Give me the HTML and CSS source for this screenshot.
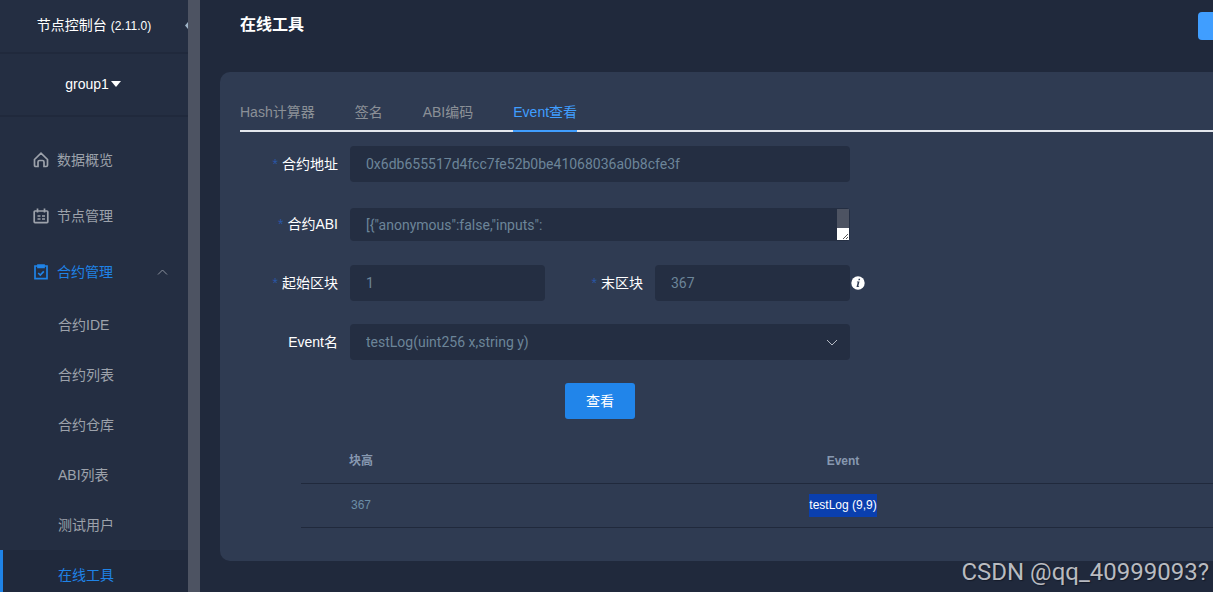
FILE: index.html
```html
<!DOCTYPE html>
<html lang="zh-CN">
<head>
<meta charset="utf-8">
<title>在线工具</title>
<link rel="stylesheet" href="styles.css">
</head>
<body>
<div class="app">
  <aside class="sidebar">
    <header class="brand">
      <span>节点控制台 <small class="version">(2.11.0)</small></span>
      <svg class="collapse" viewBox="0 0 3 7" aria-hidden="true"><path d="M3 0v7L0 3.5z"/></svg>
    </header>
    <button class="group" type="button">group1<svg class="caret" viewBox="0 0 10 6" aria-hidden="true"><path d="M0 0h10L5 6z"/></svg></button>
    <nav class="menu">
      <a class="item" href="#">
        <svg class="icon" viewBox="0 0 16 16" aria-hidden="true"><path d="M1.500 7.500 8 1.200l6.500 6.300v5.700q0 1.300-1.300 1.300H11V10q0-1.500-1.500-1.500h-3Q5 8.500 5 10v4.500H2.800q-1.300 0-1.300-1.300z"/></svg>
        <span>数据概览</span>
      </a>
      <a class="item" href="#">
        <svg class="icon" viewBox="0 0 16 16" aria-hidden="true"><path d="M2 3h12q.8 0 .8.800v10q0 .8-.8.8H2q-.8 0-.8-.8v-10Q1.200 3 2 3zM4.500.500v4M11.500.500v4M4.500 8h3M9 8h3M4.500 11h3M9 11h3"/></svg>
        <span>节点管理</span>
      </a>
      <a class="item current" href="#">
        <svg class="icon" viewBox="0 0 16 16" aria-hidden="true"><path d="M2 2h12v12.700H2zM5 1.200h6v2.300H5zM5.200 9l2.100 2 3.500-3.700"/></svg>
        <span>合约管理</span>
        <svg class="fold" viewBox="0 0 10 6" aria-hidden="true"><path d="M.5 5.500 5 1l4.500 4.500"/></svg>
      </a>
      <a class="sub" href="#">合约IDE</a>
      <a class="sub" href="#">合约列表</a>
      <a class="sub" href="#">合约仓库</a>
      <a class="sub" href="#">ABI列表</a>
      <a class="sub" href="#">测试用户</a>
      <a class="sub active" href="#">在线工具</a>
    </nav>
  </aside>

  <main class="main">
    <header class="topbar">
      <h1 class="title">在线工具</h1>
      <button class="action" type="button" aria-label="操作"></button>
    </header>
    <section class="card">
      <nav class="tabs">
        <a class="tab" href="#">Hash计算器</a>
        <a class="tab" href="#">签名</a>
        <a class="tab" href="#">ABI编码</a>
        <a class="tab selected" href="#">Event查看</a>
      </nav>
      <form class="form">
        <div class="row">
          <label class="label required" for="address">合约地址</label>
          <input class="field" id="address" type="text" value="0x6db655517d4fcc7fe52b0be41068036a0b8cfe3f">
        </div>
        <div class="row">
          <label class="label required" for="abi">合约ABI</label>
          <div class="area">
            <textarea class="field abi" id="abi" rows="1">[{"anonymous":false,"inputs":</textarea>
            <span class="track" aria-hidden="true"><svg class="grip" viewBox="0 0 12 12"><path d="M6 11l5-5M9 11l2-2"/></svg></span>
          </div>
        </div>
        <div class="row">
          <label class="label required" for="from">起始区块</label>
          <input class="field short" id="from" type="text" value="1">
          <label class="label required" for="to">末区块</label>
          <input class="field short" id="to" type="text" value="367">
          <svg class="info" viewBox="0 0 14 14" aria-hidden="true"><circle cx="7" cy="7" r="6.700"/><path d="M7.700 2.700h1.500l-.4 1.500H7.300zM6 5.500h2.500l-1.200 4.700h.9l-.2.800H5.500l1.200-4.700h-.9z"/></svg>
        </div>
        <div class="row">
          <label class="label" for="event">Event名</label>
          <div class="choice">
            <select class="field" id="event"><option>testLog(uint256 x,string y)</option></select>
            <svg class="chevron" viewBox="0 0 12 7" aria-hidden="true"><path d="M1 1l5 5 5-5"/></svg>
          </div>
        </div>
        <button class="submit" type="button">查看</button>
      </form>
      <table class="results">
        <thead><tr><th class="height">块高</th><th>Event</th></tr></thead>
        <tbody><tr><td>367</td><td><span class="marked">testLog (9,9)</span></td></tr></tbody>
      </table>
    </section>
  </main>
  <div class="watermark">CSDN @qq_40999093?</div>
</div>
</body>
</html>
```
FILE: styles.css
```css
* { box-sizing: border-box; }

body {
  margin: 0;
  background: #20293c;
  color: #fff;
  font: 14px/20px "Liberation Sans", "Noto Sans CJK SC", sans-serif;
}

a { color: inherit; text-decoration: none; }
button { border: 0; font: inherit; color: inherit; }
svg { fill: none; stroke: currentColor; }

.app {
  position: relative;
  display: flex;
  height: 100vh;
  overflow: hidden;
}

/* Sidebar */
.sidebar {
  flex: none;
  width: 200px;
  border-right: 12px solid #4d5362;
  background: #242e42;
  overflow: hidden;
}

.brand {
  position: relative;
  display: flex;
  align-items: center;
  justify-content: center;
  height: 54px;
  padding-bottom: 2px;
  border-bottom: 2px solid #20293c;
}

.version { font-size: 12px; }

.collapse {
  position: absolute;
  right: 0;
  width: 3px;
  height: 7px;
  fill: #9fb4c8;
  stroke: none;
}

.group {
  display: flex;
  align-items: center;
  justify-content: center;
  gap: 2px;
  width: 100%;
  height: 63px;
  padding: 0 8px 2px 6px;
  border-bottom: 2px solid #20293c;
  background: none;
}

.caret { width: 10px; height: 6px; fill: #fff; stroke: none; }

.menu { padding-top: 15px; color: #9da2ab; }

.item {
  display: flex;
  align-items: center;
  gap: 8px;
  height: 56px;
  padding: 0 20px 0 33px;
}

.icon { width: 16px; height: 16px; stroke-width: 1.7; }
.item.current { color: #1f83e7; }
.fold { width: 11px; height: 6px; margin-left: auto; color: #8a909c; }

.sub {
  display: block;
  height: 50px;
  padding-left: 58px;
  line-height: 50px;
}

.sub.active {
  padding-left: 55px;
  border-left: 3px solid #1f83e7;
  background: #20293c;
  color: #1f83e7;
}

/* Content runs past the right edge of the window */
.main {
  flex: 1;
  margin-right: -92px;
  padding: 0 20px;
}

.topbar {
  display: flex;
  align-items: center;
  justify-content: space-between;
  height: 52px;
  margin-bottom: 20px;
  padding-left: 20px;
}

.title { margin: 0; padding-bottom: 2px; font-size: 16px; }

.action {
  width: 87px;
  height: 28px;
  border-radius: 4px;
  background: #409eff;
}

.card {
  padding: 20px 20px 33px;
  border-radius: 10px;
  background: #2f3b52;
}

.tabs {
  display: flex;
  gap: 40px;
  height: 40px;
  border-bottom: 2px solid #e4e7ed;
  color: #8b9097;
  line-height: 40px;
}

.tab.selected {
  height: 40px;
  border-bottom: 2px solid #409eff;
  color: #409eff;
}

.form { padding-top: 14px; }

.row {
  display: flex;
  align-items: center;
  margin-bottom: 23px;
}

.label {
  flex: none;
  width: 110px;
  padding-right: 12px;
  text-align: right;
}

.required::before {
  content: "*";
  margin-right: 4px;
  color: #2a56a5;
}

.field {
  width: 500px;
  height: 36px;
  padding: 0 16px;
  border: 0;
  border-radius: 4px;
  background: #242e42;
  color: #6c8599;
  font: 14px/20px Roboto, "Noto Sans CJK SC", sans-serif;
  appearance: none;
}

.short { width: 195px; }

.area, .choice { position: relative; }
.area { display: flex; padding: 3px 0 1px; }

.abi {
  height: 33px;
  padding: 7px 28px 6px 16px;
  overflow: hidden;
  resize: none;
}

.track {
  position: absolute;
  right: 1px;
  bottom: 2px;
  display: flex;
  align-items: flex-end;
  width: 12px;
  height: 31px;
  background: #4d5362;
}

.grip { width: 12px; height: 12px; background: #fff; stroke: #555; }

.info { width: 14px; height: 14px; margin-left: 1px; fill: #fff; stroke: none; }
.info path { fill: #2f3b52; }

.chevron {
  position: absolute;
  top: 15px;
  right: 12px;
  width: 12px;
  height: 7px;
  color: #b4bac4;
}

.submit {
  display: block;
  width: 70px;
  height: 36px;
  margin: 0 0 20px 325px;
  padding: 0;
  border-radius: 3px;
  background: #2185ea;
}

.results {
  width: calc(100% - 61px);
  margin-left: 61px;
  border-collapse: collapse;
  table-layout: fixed;
  color: #6c8ea6;
  font-size: 12px;
  text-align: center;
}

.results th, .results td {
  height: 44px;
  padding: 0;
  border-bottom: 1px solid #20293c;
}

.results th { color: #8798b0; }
.height { width: 120px; }

.marked {
  display: inline-block;
  background: #0a3fae;
  color: #fff;
  line-height: 23px;
}

.watermark {
  position: absolute;
  right: 4px;
  bottom: 4px;
  color: #b9bbc0;
  font: 24px/32px Roboto, sans-serif;
  text-shadow: 1px 1px 1px #151b28;
}
```
